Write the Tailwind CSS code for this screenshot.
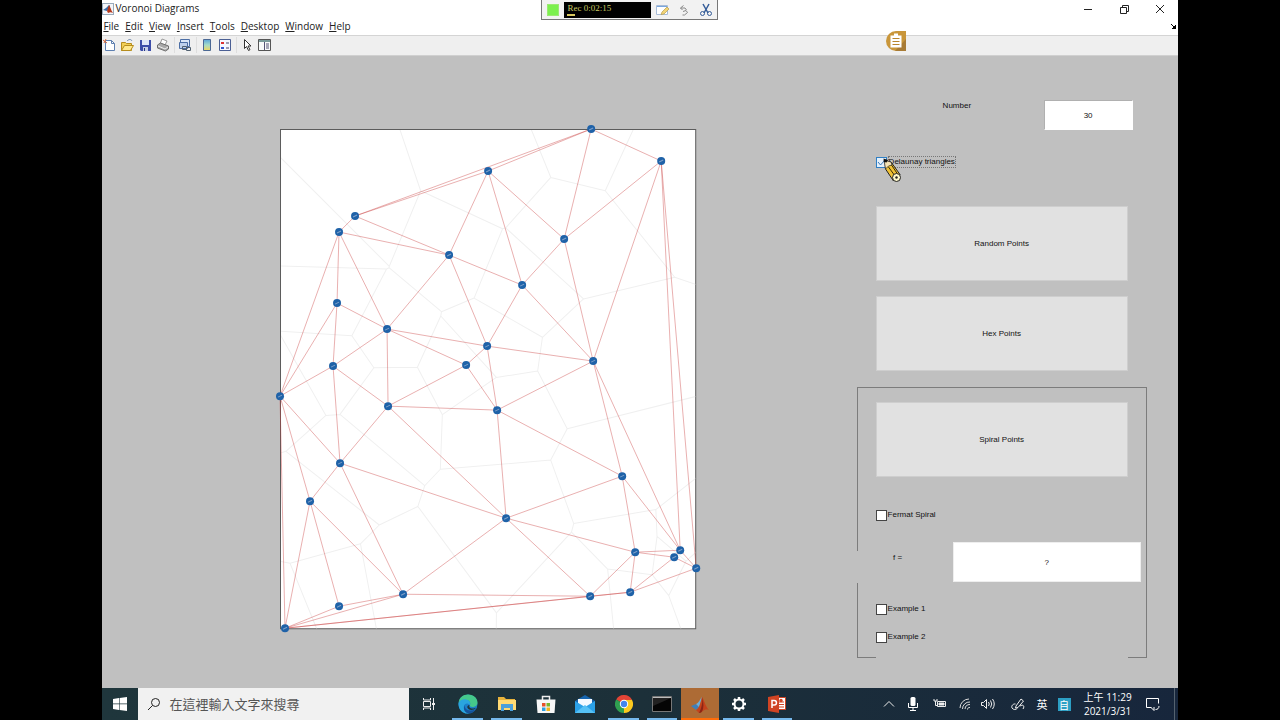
<!DOCTYPE html>
<html lang="zh-Hant">
<head>
    <meta charset="UTF-8">
    <meta name="viewport" content="width=device-width, initial-scale=1.0">
    <title>Voronoi Diagrams</title>
    <script src="https://cdn.jsdelivr.net/npm/@tailwindcss/browser@4"></script>
</head>
<body class="bg-black font-['Open_Sans','Noto_Sans_CJK_TC',sans-serif] text-[#222]">
<div class="relative mx-[8%] flex min-h-screen flex-col bg-[#c0c0c0]">

    <!-- Title bar -->
    <header class="flex h-[17px] items-center gap-px bg-white">
        <svg class="h-3 w-3" viewBox="0 0 12 12"><rect x=".5" y=".5" width="11" height="11" fill="#f4f6fa" stroke="#9ab"/><path d="M1 7l3-2 3-3 1 1-3 5z" fill="#3b6ca8"/><path d="M7 2c1 1 2 5 4 8-2-1-3-1-5 0L5 8z" fill="#b5391c"/></svg>
        <h1 class="text-[10px] leading-[17px]">Voronoi Diagrams</h1>
        <div class="ml-auto flex items-center gap-6 pr-3">
            <button aria-label="Minimize"><svg class="h-3 w-3" viewBox="0 0 12 12" fill="none" stroke="#222"><path d="M2 6.500h8"/></svg></button>
            <button aria-label="Restore"><svg class="h-3 w-3" viewBox="0 0 12 12" fill="none" stroke="#222"><path d="M2.500 4.500h6v6h-6zM4.500 4.500v-2h6v6h-2"/></svg></button>
            <button aria-label="Close"><svg class="h-3 w-3" viewBox="0 0 12 12" fill="none" stroke="#222"><path d="M2 2l8 8M10 2l-8 8"/></svg></button>
        </div>
    </header>

    <!-- Menu bar -->
    <nav class="flex h-[18px] items-center gap-1.5 bg-white pl-px text-[10px] leading-4">
        <button><u>F</u>ile</button>
        <button><u>E</u>dit</button>
        <button><u>V</u>iew</button>
        <button><u>I</u>nsert</button>
        <button><u>T</u>ools</button>
        <button><u>D</u>esktop</button>
        <button><u>W</u>indow</button>
        <button><u>H</u>elp</button>
        <svg class="mr-0.5 ml-auto h-[5px] w-[5px]" viewBox="0 0 5 5"><path d="M0 0l3 3M5 1v4H1z" fill="#000" stroke="#000"/></svg>
    </nav>

    <!-- Toolbar -->
    <div class="flex h-[21px] items-center gap-1 border-t border-b border-t-[#d4d4d4] border-b-[#d0d0d0] bg-[#efefef] pb-0.5">
        <button aria-label="New"><svg class="h-[14px] w-[14px]" viewBox="0 0 14 14"><path d="M3.500 2.500h6l3 3v7h-9z" fill="#fff" stroke="#5d7fb0"/><path d="M9.500 2.500v3h3" fill="none" stroke="#5d7fb0"/><path d="M1 2l4 3M4 1L2 5" stroke="#d8683a"/></svg></button>
        <button aria-label="Open"><svg class="h-[14px] w-[14px]" viewBox="0 0 14 14"><path d="M1.500 12.500v-8h4l1 1h5v7z" fill="#f2cf55" stroke="#b58c1d"/><path d="M1.500 12.500l3-5h9l-3 5z" fill="#ffe88c" stroke="#b58c1d"/><path d="M7 3c2-2 4-2 5 0" fill="none" stroke="#6b86ac"/></svg></button>
        <button aria-label="Save"><svg class="h-[14px] w-[14px]" viewBox="0 0 14 14"><path d="M2 2h11v11H3l-1-1z" fill="#3c4da8"/><path d="M4 2h7v5H4z" fill="#dfe6f8"/><path d="M5 9h5v4H5z" fill="#c7cfe8"/><path d="M6 10h1v3H6z" fill="#27357e"/></svg></button>
        <button aria-label="Print"><svg class="h-[14px] w-[14px]" viewBox="0 0 14 14"><path d="M4 6l2-5 5 2-2 4z" fill="#fff" stroke="#999"/><path d="M1.500 7l3-2 8 3v3l-3 2-8-3z" fill="#a8a8a8" stroke="#6e6e6e"/><path d="M2 8l7 3 3-2" fill="none" stroke="#eee"/></svg></button>
        <span class="-mr-px h-4 w-px bg-[#dedede]"></span>
        <button aria-label="Link plot"><svg class="h-[14px] w-[14px]" viewBox="0 0 14 14"><path d="M2.500 1.500h9v7h-9z" fill="#dce8f8" stroke="#4c6ea5"/><path d="M1.500 4.500h8v6h-8z" fill="#bfd1ec" stroke="#4c6ea5"/><path d="M4.500 8.500h4v3h-4zM8.500 9.500h4v3h-4z" fill="none" stroke="#51606f"/></svg></button>
        <span class="-mr-px h-4 w-px bg-[#dedede]"></span>
        <button aria-label="Insert colorbar"><svg class="h-[14px] w-[14px]" viewBox="0 0 14 14"><defs><linearGradient id="bar" x2="0" y2="1"><stop stop-color="#5aa6dc"/><stop offset=".5" stop-color="#a5dcc8"/><stop offset="1" stop-color="#f2d85c"/></linearGradient></defs><path d="M3.500 1.500h7v11h-7z" fill="url(#bar)" stroke="#4b6894"/></svg></button>
        <button aria-label="Insert legend"><svg class="h-[14px] w-[14px]" viewBox="0 0 14 14"><path d="M1.500 1.500h11v11h-11z" fill="#f5f8ff" stroke="#4b5f94"/><path d="M3 4h3v2H3z" fill="#d33"/><path d="M3 9h3v2H3z" fill="#35c"/><path d="M8 5h3M8 10h3" stroke="#446"/></svg></button>
        <span class="-mr-px h-4 w-px bg-[#dedede]"></span>
        <button aria-label="Edit plot"><svg class="h-[14px] w-[14px]" viewBox="0 0 14 14"><path d="M4.500 1.500v9l2-2 2 4 1.500-.8-2-3.700h3z" fill="#fff" stroke="#333"/></svg></button>
        <button aria-label="Property inspector"><svg class="h-[14px] w-[14px]" viewBox="0 0 14 14"><path d="M.5 1.500h12v11H.5z" fill="#f8fafa" stroke="#555"/><path d="M1 2h11v2H1z" fill="#7a9b9b"/><path d="M6.500 4v8M8 6h3M8 8h3M8 10h3" stroke="#557"/></svg></button>
    </div>

    <!-- Figure area -->
    <main class="flex flex-1 items-start pr-[31px] pl-[178px]">
        <svg id="plot" class="mt-[73px] min-w-0 flex-1 overflow-visible" viewBox="280 129 416 500" role="img" aria-label="Voronoi diagram of 30 points">
            <clipPath id="axes"><rect x="281" y="130" width="414" height="498"/></clipPath>
            <rect x="280.500" y="129.500" width="415" height="499" fill="#fff" stroke="#5c5c5c"/>
            <path id="voronoi" clip-path="url(#axes)" fill="none" stroke="#f0f0f0"/>
            <path id="delaunay" fill="none" stroke="#c83c3c" stroke-opacity=".45" stroke-width=".9"/>
            <g id="points" fill="#1f62a8"></g>
        </svg>

        <form class="ml-40 w-[290px] pt-11 font-['Liberation_Sans',sans-serif] text-[8px] leading-[10px] text-[#111]">
            <div class="flex items-start justify-between pr-[14px] pl-[86px]">
                <label for="number" class="pt-px">Number</label>
                <input id="number" type="text" value="30" class="h-[30px] w-[89px] border border-[#b0b0b0] border-r-white border-b-white bg-white text-center">
            </div>
            <div class="relative mt-[26px] ml-[19px] flex h-3 w-20 items-center gap-px">
                <input id="delaunay-on" type="checkbox" checked class="h-[11px] w-[11px] shrink-0 appearance-none border border-[#2f7fc4] bg-[#e4f0fb]">
                <svg class="pointer-events-none absolute left-px h-[9px] w-[9px]" viewBox="0 0 9 9" fill="none" stroke="#3a78b8"><path d="M1 4l2.500 3L8 2"/></svg>
                <label for="delaunay-on" class="border border-dotted border-[#777] whitespace-nowrap">Delaunay triangles</label>
                <!-- pencil pointer -->
                <svg class="pointer-events-none absolute top-0 left-1.5 h-7 w-5" viewBox="0 0 20 28"><path d="M3 5l6 1 9 12.500-6.500 6.500L3.500 13z" fill="#f0c236" stroke="#222"/><path d="M2 4l7 2 1 3-3.500 1-3 3z" fill="#f6e3b5" stroke="#222" stroke-width=".7"/><path d="M1.500 2.500L6 4 4.500 6.500 2 6z" fill="#111"/><path d="M6.500 11l6.500 9M9.500 9l6 9" stroke="#3a2a00"/><circle cx="14.500" cy="21.500" r="4" fill="#fff8c8" stroke="#222"/><circle cx="14.500" cy="21.500" r="1.200" fill="#222"/></svg>
            </div>
            <div class="mt-[38px] ml-[19px] flex w-[252px] flex-col gap-[15px]">
                <button type="button" class="h-[75px] border border-[#cecece] bg-[#e1e1e1]">Random Points</button>
                <button type="button" class="h-[75px] border border-[#cecece] bg-[#e1e1e1]">Hex Points</button>
            </div>

            <fieldset class="mt-4 h-[271px] border border-[#7c7c7c] pt-[14px]">
                <button type="button" class="ml-[18px] block h-[75px] w-[252px] border border-[#cecece] bg-[#e1e1e1]">Spiral Points</button>
                <div class="mt-8 ml-[18px] flex h-3 items-center gap-px">
                    <input id="fermat" type="checkbox" class="h-[11px] w-[11px] appearance-none border border-[#444] bg-white">
                    <label for="fermat">Fermat Spiral</label>
                </div>
                <div class="mt-[21px] flex justify-between pr-[5px]">
                    <label for="formula" class="-ml-px mt-[9px] h-8 w-[82px] bg-[#c0c0c0] pt-0.5 text-center">f =</label>
                    <input id="formula" type="text" value="?" class="h-10 w-[188px] border border-[#eee] bg-white text-center">
                </div>
                <div class="mt-5 ml-[18px] flex h-3 items-center gap-px">
                    <input id="example-1" type="checkbox" class="h-[11px] w-[11px] appearance-none border border-[#444] bg-white">
                    <label for="example-1">Example 1</label>
                </div>
                <div class="mt-1.5 ml-[18px] flex h-[38px] w-[252px] items-center gap-px bg-[#c0c0c0] pb-1.5">
                    <input id="example-2" type="checkbox" class="h-[11px] w-[11px] appearance-none border border-[#444] bg-white">
                    <label for="example-2">Example 2</label>
                </div>
            </fieldset>
        </form>
    </main>

    <!-- Taskbar -->
    <footer class="flex h-8 items-stretch bg-linear-to-r from-[#1f363c] via-[#1c3039] to-[#17263c] text-white">
        <button aria-label="Start" class="flex w-9 items-center justify-center"><svg class="h-[14px] w-[14px]" viewBox="0 0 14 14" fill="#fff"><path d="M0 2l6-1v5.600H0zM6.600.9L14 0v6.600H6.600zM0 7.300h6V13l-6-1zM6.600 7.300H14V14l-7.400-1z"/></svg></button>
        <label class="flex w-[271px] items-center gap-2 bg-[#f1f1f1] pl-[9px]">
            <svg class="h-[14px] w-[14px]" viewBox="0 0 14 14" fill="none" stroke="#222"><circle cx="8.500" cy="5.500" r="4"/><path d="M5.500 8.500L1 13"/></svg>
            <input type="text" aria-label="Search" placeholder="在這裡輸入文字來搜尋" class="min-w-0 flex-1 font-['Noto_Sans_CJK_TC',sans-serif] text-[13px] leading-5 placeholder:text-[#555]">
        </label>
        <div class="flex">
            <button aria-label="Task view" class="flex w-[39px] items-center justify-center"><svg class="h-[14px] w-[14px]" viewBox="0 0 14 14" fill="none" stroke="#eee"><path d="M1.500 4.500h7v5h-7zM1.500 1v2h7V1M1.500 13v-2h7v2M11.500 1v12"/><path d="M10 6h3v2h-3z" fill="#eee" stroke="none"/></svg></button>
            <button aria-label="Edge" class="flex w-[39px] flex-col items-center justify-end px-1"><svg class="mb-1 h-5 w-5" viewBox="0 0 20 20"><circle cx="10" cy="10" r="9.500" fill="#1c7fc9"/><path d="M.6 9C1 3.500 5 .5 10 .5c6 0 9.500 4 9.500 8 0 3-2.500 4.500-5 4.500-2 0-3-1-2.500-2C13 9 11.500 6 8 6 4.500 6 1.500 7 .6 9z" fill="#45c88b"/><path d="M.5 9C2 5 8 4 11 7c1.500 1.500 1 3 .5 4C10 9 7 9 6 12c-1 3.500 2 6.500 5 7.300C5 20.500 0 15.500.5 9z" fill="#2aa5de"/><path d="M7 11c-1 4 3 7 10.500 4.500C15 19.500 11.500 20 9 19c-3-1.500-4-5-2-8z" fill="#15539b"/><path d="M11.500 11c-1 2 1 4 4 3.500l2.500-.8c-2 2.800-7 3-8.500.3-.8-1.500.5-3 2-3z" fill="#1f363c"/></svg><span class="h-0.5 w-full bg-[#76b9ed]"></span></button>
            <button aria-label="File Explorer" class="flex w-[39px] flex-col items-center justify-end px-1"><svg class="mb-1.5 h-4 w-[18px]" viewBox="0 0 18 16"><path d="M0 1h6l2 2h9v11H0z" fill="#e8b33c"/><path d="M0 4h18v10H0z" fill="#ffda74"/><path d="M3 15V8h12v7h-3v-3H6v3z" fill="#4a9fdb"/></svg><span class="h-0.5 w-full bg-[#76b9ed]"></span></button>
            <button aria-label="Store" class="flex w-[39px] items-center justify-center"><svg class="h-5 w-5" viewBox="0 0 20 20"><path d="M6.500 6V2.500h7V6" fill="none" stroke="#eee" stroke-width="1.500"/><path d="M.5 5.500h19L18.500 19h-17z" fill="#f7f7f7"/><path d="M6 9h3.500v3.500H6z" fill="#e6502a"/><path d="M10.500 9H14v3.500h-3.500z" fill="#79b52c"/><path d="M6 13.500h3.500V17H6z" fill="#2f9fe0"/><path d="M10.500 13.500H14V17h-3.500z" fill="#f2b51e"/></svg></button>
            <button aria-label="Mail" class="flex w-[39px] items-center justify-center"><svg class="h-5 w-5" viewBox="0 0 20 20"><path d="M0 7l10-6 10 6v12H0z" fill="#1664ae"/><path d="M3 5h14v8H3z" fill="#f3f9ff"/><path d="M0 7l10 6 10-6v12H0z" fill="#2ba1e8"/><path d="M0 19l10-8 10 8z" fill="#55c1f5"/></svg></button>
            <button aria-label="Chrome" class="flex w-[39px] flex-col items-center justify-end px-1"><svg class="mb-[5px] h-[18px] w-[18px]" viewBox="0 0 18 18"><path d="M9 9L1.200 4.500A9 9 0 0 1 16.800 4.500z" fill="#e24436"/><path d="M9 9l7.800-4.500A9 9 0 0 1 9 18z" fill="#fbc91f"/><path d="M9 9v9A9 9 0 0 1 1.200 4.500z" fill="#2f9f50"/><path d="M9 5h8L12.500 11z" fill="#fbc91f"/><path d="M9 9l3.500 2L9 18z" fill="#fbc91f"/><circle cx="9" cy="9" r="4.200" fill="#fff"/><circle cx="9" cy="9" r="3.200" fill="#4385ee"/></svg><span class="h-0.5 w-full bg-[#76b9ed]"></span></button>
            <button aria-label="Command Prompt" class="flex w-[38px] flex-col items-center justify-end px-1"><svg class="mb-1.5 h-4 w-5" viewBox="0 0 20 16"><path d="M.5.5h19v15H.5z" fill="#050505" stroke="#777"/><path d="M1 1h18v1H1z" fill="#bbb"/><path d="M1 2h18L1 10z" fill="#222"/></svg><span class="h-0.5 w-full bg-[#76b9ed]"></span></button>
            <button aria-label="MATLAB" class="flex w-[38px] flex-col items-center justify-end bg-[#ad6b35]"><svg class="mb-[5px] h-4 w-[18px]" viewBox="0 0 18 16"><path d="M0 9l5-2 3 3-3 3z" fill="#3f7fb8"/><path d="M5 7c3-1 4-5 6-7L8 10z" fill="#68aedd"/><path d="M11 0c2 2 3 9 7 13-3-1-5 0-6 1-2 1-3 2-4 2l-3-3c3-1 5-7 6-13z" fill="#c4421c"/><path d="M11 0c1 4 0 10-3 16 2 0 3-1 4-4 1-4 0-9-1-12z" fill="#8c2415"/></svg><span class="h-0.5 w-full bg-[#ff6d0a]"></span></button>
            <button aria-label="Settings" class="flex w-[39px] flex-col items-center justify-end px-1"><svg class="mb-1.5 h-4 w-4" viewBox="0 0 16 16" fill="none" stroke="#fff"><circle cx="8" cy="8" r="4.500" stroke-width="2"/><path d="M8 1v2M8 13v2M1 8h2M13 8h2M3 3l1.500 1.500M11.500 11.500L13 13M13 3l-1.500 1.500M4.500 11.500L3 13" stroke-width="2.500"/></svg><span class="h-0.5 w-full bg-[#76b9ed]"></span></button>
            <button aria-label="PowerPoint" class="flex w-[38px] flex-col items-center justify-end px-1"><svg class="mb-[5px] h-[18px] w-[18px]" viewBox="0 0 18 18"><path d="M10 2.500h7.500v12H10z" fill="#fff" stroke="#d04423"/><path d="M11 7h5M11 9.500h5M11 12h5" stroke="#d04423"/><circle cx="13" cy="5.500" r="1.700" fill="#d04423"/><path d="M0 2l11-2v18L0 16z" fill="#d04423"/><path d="M4 13V5.500h2.200a2.200 2.200 0 0 1 0 4.500H4" fill="none" stroke="#fff" stroke-width="1.500"/></svg><span class="h-0.5 w-full bg-[#76b9ed]"></span></button>
        </div>
        <div class="ml-auto flex items-center gap-2.5 pr-0.5">
            <button aria-label="Show hidden icons"><svg class="h-3 w-3" viewBox="0 0 12 12" fill="none" stroke="#eee"><path d="M1 8.500l5-5 5 5"/></svg></button>
            <svg class="ml-0.5 h-[14px] w-3" viewBox="0 0 12 14"><rect x="3.500" y="0" width="5" height="9" rx="1.500" fill="#fff"/><path d="M1.500 6v4.500h9V6M6 10v3.500M3 13.500h6" fill="none" stroke="#fff"/></svg>
            <svg class="ml-1 h-3 w-[14px]" viewBox="0 0 14 12" fill="none" stroke="#eee"><path d="M4.500 3.500h8v5h-8z"/><path d="M6 5h5v2H6z" fill="#eee"/><path d="M1 1v2h3V1M2.500 3v4.500h2"/></svg>
            <svg class="ml-0.5 h-3 w-3" viewBox="0 0 12 12" fill="none" stroke="#ddd"><path d="M1 10A9 9 0 0 1 10 1M3.500 11A7 7 0 0 1 11 4M6 11a5 5 0 0 1 5-4.500M8.500 11.500A2 2 0 0 1 11 9.500"/></svg>
            <svg class="h-3 w-[14px]" viewBox="0 0 14 12" fill="none" stroke="#eee"><path d="M.5 4.500h2l3-3v9l-3-3h-2zM7.500 4q1.500 2 0 4M9.500 2.500q2.500 3.500 0 7M11.500 1q3.500 5 0 10"/></svg>
            <svg class="ml-1.5 h-[14px] w-[14px]" viewBox="0 0 14 14" fill="none" stroke="#eee"><path d="M5 9l5-7 2.500 2-5.500 6.500-2.500.5zM4.500 7C2 6.500 0 9 1 11c1.500 2 4 2 5.500 0M9 9c3-2 5 0 3 3"/></svg>
            <span class="ml-0.5 font-['Noto_Sans_CJK_TC',sans-serif] text-[11px] leading-4">英</span>
            <span class="h-[13px] w-[13px] bg-[#2c9fc4] text-center font-['Noto_Sans_CJK_TC',sans-serif] text-[10px] leading-[13px]">自</span>
            <p class="ml-0.5 w-[50px] text-center text-[10px] leading-[14px] whitespace-nowrap">上午 11:29<br>2021/3/31</p>
            <button aria-label="Notifications" class="ml-[3px]"><svg class="h-[14px] w-[14px]" viewBox="0 0 14 14" fill="none" stroke="#fff"><path d="M5.500 10.500h-5v-9h12v5M5 10.500l3 3V10M9.500 12.500c2 0 3.500-1 3.500-3.500"/></svg></button>
            <span class="mr-px ml-1 h-8 w-px bg-[#55626f]"></span>
        </div>
    </footer>

    <!-- Screen recorder, floats over the window -->
    <div class="absolute top-0 left-[439px] flex h-5 w-[177px] items-center border border-t-0 border-[#777] bg-[#f2f2f2] pl-[5px]">
        <button aria-label="Record" class="h-3 w-3 border border-[#9bea72] bg-[#7cf04e]"></button>
        <p class="ml-[5px] h-4 w-[87px] bg-black pl-[3px] font-['Liberation_Serif',serif] text-[9px] leading-3 text-[#c9c963]">Rec 0:02:15<span class="block h-0.5 w-2 bg-[#d8c860]"></span></p>
        <button aria-label="Annotate" class="ml-[5px]"><svg class="h-[14px] w-[14px]" viewBox="0 0 14 14"><path d="M.5 2.500h11v9H.5z" fill="#fff" stroke="#a9bdd8"/><path d="M1 3h10v1H1z" fill="#7aa7de"/><path d="M6 9l5-5 2 2-5 5-3 .5z" fill="#f2d576" stroke="#b79c4e" stroke-width=".7"/></svg></button>
        <button aria-label="Effects" class="ml-[7px]"><svg class="h-[14px] w-[14px]" viewBox="0 0 14 14" fill="none" stroke="#888"><path d="M6.500 2.500L3.500 5l2 2M3.500 5H8l1.500 2M6 8.500l3-1 1.500 2-3 2.500H5.500"/></svg></button>
        <button aria-label="Cut" class="ml-2"><svg class="h-[14px] w-[14px]" viewBox="0 0 14 14" fill="none" stroke="#345c98"><path d="M4 1l5 9M10 1L5 10" stroke-width="1.500"/><circle cx="3.500" cy="10.500" r="2"/><circle cx="10.500" cy="10.500" r="2"/></svg></button>
    </div>
    <button aria-label="Notes" class="absolute top-[31px] left-[784px]"><svg class="h-5 w-5" viewBox="0 0 20 20"><path d="M10 0h10v20H10A10 10 0 0 1 10 0z" fill="#c9963a"/><path d="M20 8v12H9z" fill="#a87b35"/><path d="M4.500 4.500h11v12h-11zM8 2.500h4v3H8z" fill="#fff"/><path d="M6.500 7.500h7M6.500 10.500h7M6.500 13.500h7" stroke="#b9852c"/></svg></button>
</div>

<script>
    const pts = [
        [591, 129], [661, 161], [488, 171], [355, 216], [339, 232], [449, 255],
        [564, 239], [522, 285], [337, 303], [387, 329], [487, 346], [466, 365],
        [593, 361], [333, 366], [280, 396], [388, 406], [497, 410], [340, 463],
        [310, 501], [622, 476], [506, 518], [635, 552], [680, 550], [674, 557],
        [696, 568], [630, 592], [590, 596], [403, 594], [339, 606], [285, 628]
    ];

    function circumcenter(a, b, c) {
        const bx = b[0] - a[0], by = b[1] - a[1], cx = c[0] - a[0], cy = c[1] - a[1];
        const d = 2 * (bx * cy - by * cx);
        if (!d) return null;
        const b2 = bx * bx + by * by, c2 = cx * cx + cy * cy;
        return [a[0] + (cy * b2 - by * c2) / d, a[1] + (bx * c2 - cx * b2) / d];
    }

    // every triangle whose circumcircle is empty belongs to the triangulation
    const edges = {};
    for (let i = 0; i < pts.length; i++)
        for (let j = i + 1; j < pts.length; j++)
            for (let k = j + 1; k < pts.length; k++) {
                const o = circumcenter(pts[i], pts[j], pts[k]);
                if (!o) continue;
                const r = Math.hypot(o[0] - pts[i][0], o[1] - pts[i][1]);
                if (pts.some((p, n) => n !== i && n !== j && n !== k && Math.hypot(o[0] - p[0], o[1] - p[1]) < r - 1e-6)) continue;
                [[i, j, k], [j, k, i], [i, k, j]].forEach(([a, b, c]) => {
                    (edges[a + "," + b] = edges[a + "," + b] || []).push({ o, c });
                });
            }

    let red = "", grey = "";
    for (const key in edges) {
        const [a, b] = key.split(",").map(n => pts[n]);
        const [s, t] = edges[key];
        red += `M${a}L${b}`;
        let end;
        if (t) {
            end = t.o;
        } else {
            // hull edge: the cell border runs outwards, away from the third corner
            const c = pts[s.c];
            let nx = b[1] - a[1], ny = a[0] - b[0];
            if (nx * (c[0] - a[0]) + ny * (c[1] - a[1]) > 0) { nx = -nx; ny = -ny; }
            const len = Math.hypot(nx, ny);
            end = [s.o[0] + nx / len * 2000, s.o[1] + ny / len * 2000];
        }
        grey += `M${s.o}L${end}`;
    }
    document.getElementById("delaunay").setAttribute("d", red);
    document.getElementById("voronoi").setAttribute("d", grey);
    document.getElementById("points").innerHTML = pts.map(p =>
        `<circle cx="${p[0]}" cy="${p[1]}" r="4"/><path d="M${p[0] - 2} ${p[1] + 1}l4 -2" stroke="#7f9fc8"/>`).join("");
</script>
</body>
</html>
